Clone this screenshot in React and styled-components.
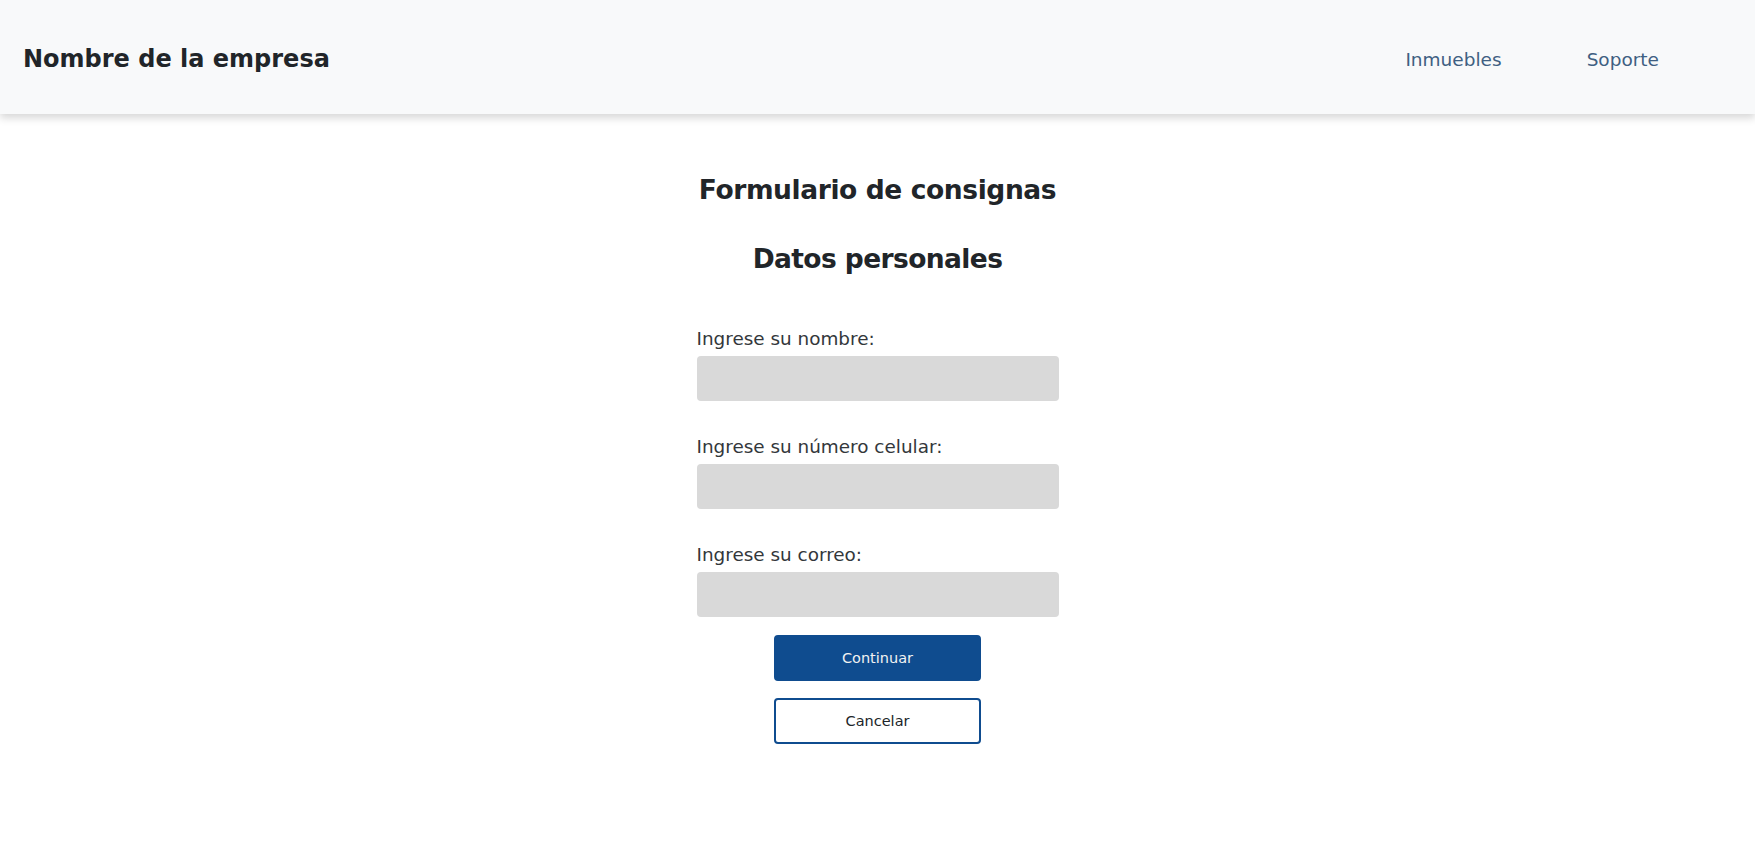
import React from 'react'
import styled, { createGlobalStyle } from 'styled-components';

const GlobalStyle = createGlobalStyle`
    body {
        margin: 0;
        background: #fff;
        font-family: "DejaVu Sans", "Open Sans", sans-serif;
        color: #212529;
    }
`

const fields = [
    { id: 'nombre', label: 'Ingrese su nombre:' },
    { id: 'celular', label: 'Ingrese su número celular:' },
    { id: 'correo', label: 'Ingrese su correo:' },
];

const App = () => {
    return (
        <>
            <GlobalStyle />
            <Header>
                <Brand>Nombre de la empresa</Brand>
                <Nav>
                    <NavLink href="#">Inmuebles</NavLink>
                    <NavLink href="#">Soporte</NavLink>
                </Nav>
            </Header>
            <Main>
                <Title>Formulario de consignas</Title>
                <Subtitle>Datos personales</Subtitle>
                <Form onSubmit={e => e.preventDefault()}>
                    {fields.map(f => (
                        <Field key={f.id}>
                            <Label htmlFor={f.id}>{f.label}</Label>
                            <Input id={f.id} type="text" />
                        </Field>
                    ))}
                    <Actions>
                        <Button type="submit" primary>Continuar</Button>
                        <Button type="button">Cancelar</Button>
                    </Actions>
                </Form>
            </Main>
        </>
    )
};

export default App;

const Header = styled.header`
    height: 114px;
    background: #f8f9fa;
    box-shadow: 0 4px 8px rgba(0, 0, 0, 0.16);
    display: flex;
    align-items: center;
    justify-content: space-between;
    padding: 4px 96px 0 23px;
    box-sizing: border-box;
`

const Brand = styled.div`
    font-size: 24px;
    font-weight: 700;
    color: #212529;
`

const Nav = styled.nav`
    display: flex;
    gap: 85px;
`

const NavLink = styled.a`
    font-size: 18.5px;
    color: #3f5f82;
    text-decoration: none;
`

const Main = styled.main`
    display: flex;
    flex-direction: column;
    align-items: center;
    padding-top: 59px;
`

const Title = styled.h1`
    margin: 0;
    font-size: 26.5px;
    line-height: 34px;
    font-weight: 700;
    letter-spacing: -0.4px;
`

const Subtitle = styled.h2`
    margin: 35px 0 0;
    font-size: 26.5px;
    line-height: 34px;
    font-weight: 700;
    letter-spacing: -0.6px;
`

const Form = styled.form`
    width: 362px;
    margin-top: 51px;
    display: flex;
    flex-direction: column;
`

const Field = styled.div`
    display: flex;
    flex-direction: column;
    gap: 5px;
    & + & {
        margin-top: 34px;
    }
`

const Label = styled.label`
    font-size: 18.4px;
    line-height: 24px;
    color: #33373b;
`

const Input = styled.input`
    height: 45px;
    border: none;
    border-radius: 4px;
    background: #d9d9d9;
    outline: none;
    padding: 0 12px;
    font-size: 16px;
`

const Actions = styled.div`
    display: flex;
    flex-direction: column;
    align-items: center;
    gap: 17px;
    margin-top: 18px;
`

const Button = styled.button`
    width: 207px;
    height: 46px;
    border-radius: 4px;
    border: 2px solid #0f4c8f;
    background: ${p => p.primary ? '#0f4c8f' : '#fff'};
    color: ${p => p.primary ? '#f2f2f2' : '#212529'};
    font-family: inherit;
    font-size: 14.5px;
    cursor: pointer;
`
